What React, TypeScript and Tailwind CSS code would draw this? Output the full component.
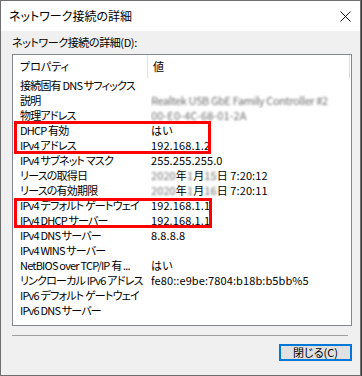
import React from 'react';

type Row = { name: string; value: React.ReactNode };

const Blur = ({ children }: { children: React.ReactNode }) => (
  <span className="blur-[1.2px] text-[#6f6f6f]">{children}</span>
);

const rows: Row[] = [
  { name: '接続固有 DNS サフィックス', value: '' },
  {
    name: '説明',
    value: (
      <span className="tracking-[-0.4px]">
        <Blur>Realtek USB GbE Family Controller #2</Blur>
      </span>
    ),
  },
  { name: '物理アドレス', value: <Blur>00-E0-4C-68-01-2A</Blur> },
  { name: 'DHCP 有効', value: 'はい' },
  { name: 'IPv4 アドレス', value: '192.168.1.2' },
  { name: 'IPv4 サブネット マスク', value: '255.255.255.0' },
  {
    name: 'リースの取得日',
    value: (
      <>
        <Blur>2020</Blur>年<Blur>1</Blur>月<Blur>15</Blur>日 7:20:12
      </>
    ),
  },
  {
    name: 'リースの有効期限',
    value: (
      <>
        <Blur>2020</Blur>年<Blur>1</Blur>月<Blur>16</Blur>日 7:20:11
      </>
    ),
  },
  { name: 'IPv4 デフォルト ゲートウェイ', value: '192.168.1.1' },
  { name: 'IPv4 DHCP サーバー', value: '192.168.1.1' },
  { name: 'IPv4 DNS サーバー', value: '8.8.8.8' },
  { name: 'IPv4 WINS サーバー', value: '' },
  { name: 'NetBIOS over TCP/IP 有 ...', value: 'はい' },
  { name: 'リンクローカル IPv6 アドレス', value: 'fe80::e9be:7804:b18b:b5bb%5' },
  { name: 'IPv6 デフォルト ゲートウェイ', value: '' },
  { name: 'IPv6 DNS サーバー', value: '' },
];

export default function App() {
  return (
    <div className="w-[362px] h-[376px] bg-[#3b3b3b] font-['Noto_Sans_CJK_JP',sans-serif] text-black [font-feature-settings:'palt']">
      <div className="w-[361px] h-[376px] border border-[#6f6f6f] bg-[#f0f0f0] flex flex-col">
        {/* title bar */}
        <div className="h-[30px] bg-white flex items-center justify-between pl-[8px] pr-[9px]">
          <span className="text-[12px] leading-none">ネットワーク接続の詳細</span>
          <svg width="11" height="11" viewBox="0 0 11 11">
            <path d="M0.5 0.5 L10.5 10.5 M10.5 0.5 L0.5 10.5" stroke="#111" strokeWidth="1" />
          </svg>
        </div>

        <div className="flex-1 flex flex-col pl-[11px] pr-[8px] pt-[4px] text-[11px]">
          <div className="h-[15px] leading-[15px] tracking-[-0.4px]">ネットワーク接続の詳細(D):</div>

          {/* list view */}
          <div className="relative mt-[4px] h-[272px] w-[340px] border border-[#828790] bg-white leading-[15px]">
            <div className="flex h-[23px] items-center">
              <div className="w-[134px] pl-[7px]">プロパティ</div>
              <div className="w-px h-full bg-[#e5e5e5]" />
              <div className="flex-1 pl-[5px]">値</div>
              <div className="w-px h-full bg-[#dcdcdc] mr-[1px]" />
            </div>
            {rows.map((r) => (
              <div key={r.name} className="flex h-[15px] items-center whitespace-nowrap">
                <div className="w-[134px] mr-[4px] pl-[7px] overflow-hidden tracking-[-0.8px]">{r.name}</div>
                <div className="flex-1 overflow-hidden tracking-[0.1px]">{r.value}</div>
              </div>
            ))}

            {/* highlight boxes */}
            <div className="absolute left-[1px] top-[66px] w-[197px] h-[33px] border-[3px] border-[#ff0000]" />
            <div className="absolute left-[1px] top-[143px] w-[198px] h-[30px] border-[3px] border-[#ff0000]" />
          </div>

          <div className="mt-[9px] h-px w-[336px] bg-[#a0a0a0]" />

          <button className="mt-[8px] self-end w-[73px] h-[17px] border-2 border-[#0078d7] bg-[#e1e1e1] leading-none flex items-center justify-center">
            閉じる(C)
          </button>
        </div>
      </div>
    </div>
  );
}
